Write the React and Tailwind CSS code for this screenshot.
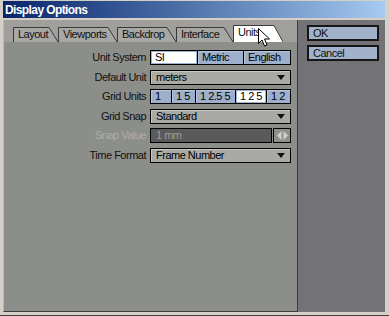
import React from "react";

const tabs = [
  { label: "Layout", w: 45 },
  { label: "Viewports", w: 59 },
  { label: "Backdrop", w: 59 },
  { label: "Interface", w: 57 },
  { label: "Units", w: 50, active: true },
];

const Tab = ({ label, w, active }) => {
  const h = active ? 17 : 15;
  return (
    <div className="relative shrink-0" style={{ width: w, height: h }}>
      <svg className="absolute inset-0" width={w} height={h}>
        <path
          d={`M0.5 ${h} V0.5 H${w - 9} L${w} ${h}`}
          fill={active ? "#ffffff" : "#a7a8a4"}
          stroke="#3a3a3a"
        />
      </svg>
      <span className="relative block pl-[5px] leading-[15px] text-[#111]">{label}</span>
    </div>
  );
};

const Arrow = () => (
  <svg width="8" height="5" className="shrink-0">
    <polygon points="0,0 8,0 4,5" fill="#111" />
  </svg>
);

const Dropdown = ({ value }) => (
  <div className="h-[15px] border border-black bg-[#a9aaa6] shadow-[inset_1px_1px_0_#c6c6c2] flex items-center justify-between pl-[5px] pr-[5px]">
    <span className="leading-[13px]">{value}</span>
    <Arrow />
  </div>
);

const Seg = ({ items }) => (
  <div className="h-[15px] bg-black p-px flex gap-px">
    {items.map((it) => (
      <div
        key={it.label}
        style={it.w ? { width: it.w } : undefined}
        className={
          (it.w ? "shrink-0 " : "flex-1 ") +
          (it.on
            ? "bg-white shadow-[inset_0_0_0_1px_#9db0cd]"
            : "bg-[#9eafcb] shadow-[inset_1px_1px_0_#b9c6db]") +
          " pl-[4px] leading-[13px] whitespace-nowrap"
        }
      >
        {it.label}
      </div>
    ))}
  </div>
);

const Label = ({ children, dim }) => (
  <div className={"text-right leading-[15px] " + (dim ? "text-[#aeafab]" : "text-[#111]")}>
    {children}
  </div>
);

export default function App() {
  return (
    <div className="w-[389px] h-[316px] bg-[#d4d0c8] flex flex-col pt-[1px] pl-[3px] pr-[4px] border-b border-[#404040] overflow-hidden font-['Liberation_Sans',Arial,sans-serif] text-[11px] tracking-[-0.5px] relative">
      <div className="h-[17px] shrink-0 bg-gradient-to-r from-[#0a246a] to-[#a6caf0] flex items-center pl-[2px]">
        <span className="text-white font-bold text-[12px] tracking-[-0.6px]">Display Options</span>
      </div>
      <div className="h-[2px] shrink-0" />
      <div className="flex h-[292px] shrink-0">
        <div className="w-[295px] flex flex-col border-r border-b border-[#3c3c3c] border-l border-l-[#b8b8b4]">
          <div className="h-[22px] bg-[#a09f9b] flex items-end pl-[9px]">
            {tabs.map((t) => (
              <Tab key={t.label} {...t} />
            ))}
          </div>
          <div className="flex-1 bg-[#8c8e8a] pt-[8px]">
            <div className="grid grid-cols-[142px_141px] gap-x-[4px] gap-y-[4.6px]">
              <Label>Unit System</Label>
              <Seg
                items={[
                  { label: "SI", w: 46, on: true },
                  { label: "Metric", w: 45 },
                  { label: "English" },
                ]}
              />
              <Label>Default Unit</Label>
              <Dropdown value="meters" />
              <Label>Grid Units</Label>
              <Seg
                items={[
                  { label: "1", w: 20 },
                  { label: "1 5", w: 23 },
                  { label: "1 2.5 5", w: 39 },
                  { label: "1 2 5", w: 30, on: true },
                  { label: "1 2" },
                ]}
              />
              <Label>Grid Snap</Label>
              <Dropdown value="Standard" />
              <Label dim>Snap Value</Label>
              <div className="h-[15px] flex gap-px">
                <div className="flex-1 border border-black bg-[#5a5a5a] pl-[5px] leading-[13px] text-[#9d9d9b]">
                  1 mm
                </div>
                <div className="w-[18px] border border-black bg-[#8f908c] flex items-center justify-center">
                  <svg width="11" height="9">
                    <polygon points="0,4.5 4.5,0 4.5,9" fill="#cfd0cc" />
                    <polygon points="6.5,0 11,4.5 6.5,9" fill="#cfd0cc" />
                  </svg>
                </div>
              </div>
              <Label>Time Format</Label>
              <Dropdown value="Frame Number" />
            </div>
          </div>
        </div>
        <div className="flex-1 bg-[#737277] pt-[5px] pl-[9px] flex flex-col gap-[4px]">
          <div className="w-[72px] h-[16px] border-2 border-[#161616] bg-[#a3b2cb] pl-[4px] leading-[12px] text-[#111]">
            OK
          </div>
          <div className="w-[72px] h-[16px] border-2 border-[#161616] bg-[#a3b2cb] pl-[4px] leading-[12px] text-[#111]">
            Cancel
          </div>
        </div>
      </div>
      <svg className="absolute left-[258px] top-[28px]" width="13" height="20">
        <path
          d="M0.5 0.5 V15.5 L4 12 L6.5 18 L9 17 L6.5 11 H11.5 Z"
          fill="#ffffff"
          stroke="#000"
          strokeLinejoin="miter"
        />
      </svg>
    </div>
  );
}
